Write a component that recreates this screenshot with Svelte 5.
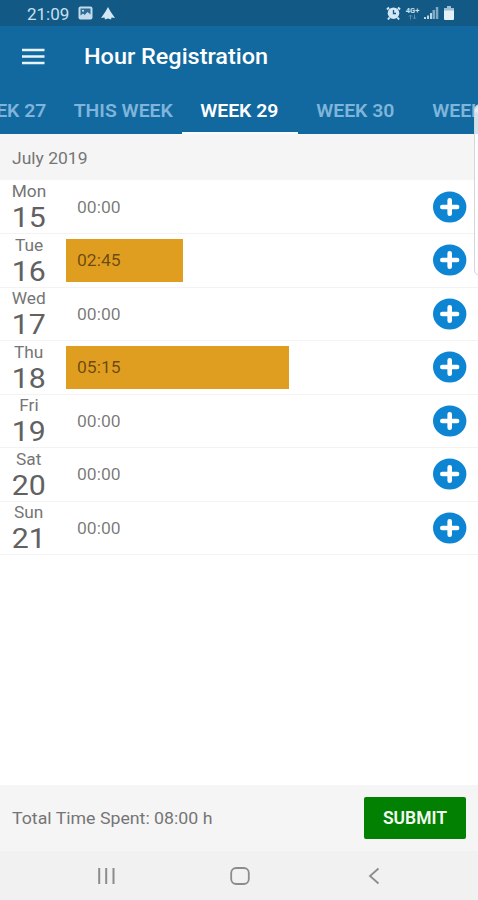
<script>
  const PX_PER_HOUR = 42.6;

  let tabs = ['WEEK 27', 'THIS WEEK', 'WEEK 29', 'WEEK 30', 'WEEK 31'];
  let active = $state(2);

  let days = [
    { name: 'Mon', date: 15, time: '00:00' },
    { name: 'Tue', date: 16, time: '02:45' },
    { name: 'Wed', date: 17, time: '00:00' },
    { name: 'Thu', date: 18, time: '05:15' },
    { name: 'Fri', date: 19, time: '00:00' },
    { name: 'Sat', date: 20, time: '00:00' },
    { name: 'Sun', date: 21, time: '00:00' }
  ];

  function hours(time) {
    const [h, m] = time.split(':').map(Number);
    return h + m / 60;
  }
</script>

<div class="screen">
  <div class="status">
    <span class="clock">21:09</span>
    <svg width="15" height="14" viewBox="0 0 15 14">
      <rect x="0.5" y="0.5" width="14" height="13" rx="2" fill="#c3dced" />
      <path d="M2.500 2.500h10v6l-3-2.500-3 3-1.500-1.500-2.500 2z" fill="#2f6d97" />
      <circle cx="5" cy="4.700" r="1" fill="#d3e7f4" />
    </svg>
    <svg class="plane" width="14" height="13" viewBox="0 0 14 13">
      <path d="M7 0 9.500 4.500 14 11l-3.500-.5L10 12.500 7 11.500l-3 1-.5-2L0 11l4.500-6.500z" fill="#d3e7f4" />
    </svg>
    <div class="signals">
      <svg width="15" height="14" viewBox="0 0 15 14">
        <path d="M3 1.500 1 3.500M12 1.500l2 2M3.500 11.500 2 13.500M11.500 11.500l1.500 2" stroke="#d3e7f4" stroke-width="2" />
        <circle cx="7.500" cy="7.200" r="5.800" fill="#d3e7f4" />
        <path d="M7.500 4v3.500H10" stroke="#165985" stroke-width="1.300" fill="none" />
      </svg>
      <div class="net">
        <span>4G+</span>
        <svg width="9" height="6" viewBox="0 0 9 6">
          <path d="M2.500 5.500V1M1 2.500 2.500 1 4 2.500M6.500.5V5M5 3.500 6.500 5 8 3.500" stroke="#5b8fb2" fill="none" />
        </svg>
      </div>
      <svg width="15" height="14" viewBox="0 0 15 14">
        <path d="M0 11h2v2H0zM3 9.500h2V13H3zM6 7h2v6H6z" fill="#bcd5e5" />
        <path d="M8.500 4H11v9H8.500zM11.800 1h2.500v12h-2.500z" fill="#82a9c3" />
      </svg>
      <svg class="battery" width="10" height="14" viewBox="0 0 10 14">
        <path d="M3 0h4v2h3v3H0V2h3z" fill="#9fbed2" />
        <path d="M0 4.500h10V13q0 1-1 1H1q-1 0-1-1z" fill="#e4f0f7" />
      </svg>
    </div>
  </div>

  <header class="appbar">
    <button class="menu" aria-label="Menu">
      <svg width="23" height="17" viewBox="0 0 23 17">
        <path d="M0 2h22.500M0 8.500h22.500M0 15h22.500" stroke="#e6f3fb" stroke-width="2.400" />
      </svg>
    </button>
    <h1><span class="wide">Hour Registration</span></h1>
  </header>

  <nav class="tabs">
    {#each tabs as tab, i}
      <button class="tab" class:active={i === active} onclick={() => (active = i)}>
        <span class="wide">{tab}</span>
      </button>
    {/each}
  </nav>

  <div class="month"><span class="wide">July 2019</span></div>

  <div class="days">
    {#each days as day}
      <div class="row">
        <div class="day">
          <span class="name"><span class="wide">{day.name}</span></span>
          <span class="date"><span class="wide">{day.date}</span></span>
        </div>
        <div class="track">
          <div class="bar" style:width="{hours(day.time) * PX_PER_HOUR}px">
            <span class="time"><span class="wide">{day.time}</span></span>
          </div>
        </div>
        <button class="add" aria-label="Add hours">
          <svg width="34" height="32" viewBox="0 0 34 32">
            <ellipse cx="16.700" cy="16" rx="16.700" ry="15.400" fill="#0d85d3" />
            <path d="M16.700 9.200v13.600M9.300 16h14.800" stroke="#fff" stroke-width="4.600" stroke-linecap="round" />
          </svg>
        </button>
      </div>
    {/each}
  </div>

  <footer class="total">
    <span class="sum"><span class="wide">Total Time Spent: 08:00 h</span></span>
    <button class="submit">SUBMIT</button>
  </footer>

  <div class="navbar">
    <svg width="20" height="18" viewBox="0 0 20 18">
      <path d="M3.200 1v16M10.200 1v16M17.500 1v16" stroke="#8c8c8c" stroke-width="2" />
    </svg>
    <svg width="20" height="18" viewBox="0 0 20 18">
      <rect x="1.200" y="1" width="17.600" height="16" rx="5" stroke="#8c8c8c" stroke-width="1.800" fill="none" />
    </svg>
    <svg width="20" height="18" viewBox="0 0 20 18">
      <path d="M14.500 1.500 6 9l8.500 7.500" stroke="#8c8c8c" stroke-width="1.800" fill="none" />
    </svg>
  </div>

  <div class="edge"></div>
</div>

<style>
  :global(body) { margin: 0; background: #fff; }
  .screen { position: relative; display: flex; flex-direction: column; width: 478px; height: 900px; overflow: hidden; font-family: Roboto, sans-serif; color: #757575; background: #fff; }
  button { margin: 0; padding: 0; border: 0; background: none; font: inherit; color: inherit; }
  svg { display: block; flex: none; }
  .wide { display: inline-block; white-space: nowrap; transform: scaleX(1.06); transform-origin: left center; }

  .status { display: flex; align-items: center; height: 26px; flex: none; padding: 0 24px 0 27px; background: #125985; color: #c9e0f0; }
  .clock { width: 51px; font-size: 17px; line-height: 26px; padding-top: 2px; }
  .plane { margin-left: 8px; }
  .signals { display: flex; align-items: center; margin-left: auto; gap: 4px; }
  .net { display: flex; flex-direction: column; align-items: center; width: 15px; font-size: 7.500px; font-weight: 700; line-height: 7px; }
  .battery { margin-left: 1px; }

  .appbar { display: flex; align-items: center; height: 60px; flex: none; background: #12699f; }
  .menu { width: 84px; padding-left: 22px; box-sizing: border-box; }
  h1 { margin: 0; padding-top: 2px; font-size: 22px; font-weight: 500; line-height: 26px; color: #fff; }
  h1 .wide { transform: scaleX(1.065); }

  .tabs { display: flex; justify-content: center; height: 48px; flex: none; padding-left: 1px; background: #12699f; }
  .tab { width: 116px; height: 48px; flex: none; box-sizing: border-box; padding-top: 3px; border-bottom: 2px solid transparent; font-size: 18.500px; font-weight: 600; color: #7fb5da; }
  .tab.active { color: #fff; border-bottom-color: #f7fbfd; }
  .tab .wide { transform: scaleX(1.05); transform-origin: center; }
  .day .wide { transform-origin: center; }

  .month { height: 46px; flex: none; padding-left: 12px; background: #f5f5f5; font-size: 16.500px; line-height: 50px; }

  .days { flex: 1; padding-top: .5px; }
  .row { display: flex; align-items: center; height: 53.500px; box-sizing: border-box; padding-right: 11px; border-bottom: 1px solid #f3f3f3; }
  .day { display: flex; flex-direction: column; align-items: center; width: 58px; height: 53px; margin-right: 7.500px; }
  .name { font-size: 16px; line-height: 18px; padding-top: 3px; }
  .name .wide { transform: scaleX(1.08); }
  .date { padding-top: 2px; font-size: 28px; line-height: 30px; color: #616161; }
  .date .wide { transform: scaleX(1.08); }
  .track { flex: 1; }
  .bar { height: 42.500px; background: #e09e20; font-size: 16.500px; line-height: 43px; color: rgba(0, 0, 0, .54); white-space: nowrap; }
  .time { padding-left: 11px; }
  .time .wide { transform: scaleX(1.06); }

  .total { display: flex; align-items: center; justify-content: space-between; height: 66px; flex: none; padding: 0 12px; background: #f5f5f5; }
  .sum { font-size: 16.500px; }
  .sum .wide { transform: scaleX(1.075); }
  .submit { width: 102px; height: 42px; border-radius: 2px; background: #028002; color: #f2fbf2; font-size: 17.500px; font-weight: 600; }

  .navbar { display: flex; align-items: center; justify-content: space-between; height: 49px; flex: none; box-sizing: border-box; padding: 0 94px 0 96px; background: #f1f1f1; }

  /* handle of the edge panel, floats over the app */
  .edge { position: absolute; right: -9px; top: 104px; width: 11px; height: 170px; border: 1px solid #d5d5d5; border-radius: 6px; background: rgba(255, 255, 255, .8); }
</style>
